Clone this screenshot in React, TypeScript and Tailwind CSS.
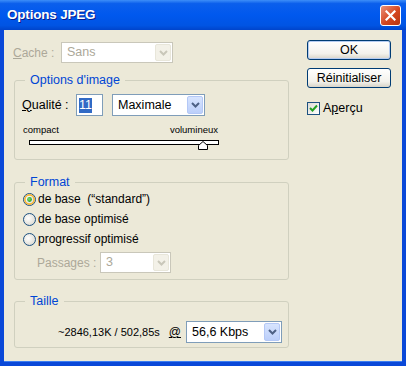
import React from "react";

function Chevron({ disabled }: { disabled?: boolean }) {
  return (
    <svg width="9" height="6" viewBox="0 0 9 6">
      <path
        d="M1 1 L4.5 4.5 L8 1"
        fill="none"
        stroke={disabled ? "#C9C7BA" : "#4D6185"}
        strokeWidth="2"
      />
    </svg>
  );
}

function Combo({
  value,
  className,
  disabled,
}: {
  value: string;
  className: string;
  disabled?: boolean;
}) {
  return (
    <div
      className={`flex items-stretch border bg-white ${
        disabled ? "border-[#C9C7BA] text-[#ACA899]" : "border-[#7F9DB9] text-black"
      } ${className}`}
    >
      <div className="flex flex-1 items-center pl-[5px] text-[12.5px]">{value}</div>
      <div
        className={`m-[1px] flex w-[16px] items-center justify-center rounded-[2px] border ${
          disabled
            ? "border-[#E8E6DA] bg-[#F3F1E8]"
            : "border-[#B4C8F6] bg-[linear-gradient(to_bottom,#D7E4FE,#BCCFFA)]"
        }`}
      >
        <Chevron disabled={disabled} />
      </div>
    </div>
  );
}

function Radio({ checked, hover }: { checked?: boolean; hover?: boolean }) {
  return (
    <svg width="13" height="13" viewBox="0 0 13 13">
      <defs>
        <radialGradient id="rb" cx="0.4" cy="0.4" r="0.7">
          <stop offset="0" stopColor="#FFFFFF" />
          <stop offset="1" stopColor="#D8D6CC" />
        </radialGradient>
        <radialGradient id="rd" cx="0.4" cy="0.4" r="0.6">
          <stop offset="0" stopColor="#7BE27B" />
          <stop offset="1" stopColor="#21A121" />
        </radialGradient>
      </defs>
      <circle cx="6.5" cy="6.5" r="6" fill="url(#rb)" stroke="#1C5180" strokeWidth="1" />
      {hover && <circle cx="6.5" cy="6.5" r="4.6" fill="none" stroke="#F8B636" strokeWidth="1.6" />}
      {checked && <circle cx="6.5" cy="6.5" r="2.4" fill="url(#rd)" />}
    </svg>
  );
}

function Group({
  title,
  className,
  children,
}: {
  title: string;
  className: string;
  children: React.ReactNode;
}) {
  return (
    <fieldset className={`ml-[1px] w-[275px] rounded-[3px] border border-[#D0D0BF] ${className}`}>
      <legend className="ml-[10px] px-[5px] text-[12.5px] leading-[14px] text-[#0046D5]">{title}</legend>
      {children}
    </fieldset>
  );
}

export default function App() {
  return (
    <div className="flex h-[366px] w-[406px] flex-col bg-[#0A48D8] font-['Liberation_Sans',Arial,sans-serif] text-[12px] text-black">
      {/* Title bar */}
      <div className="flex h-[30px] items-center justify-between bg-[linear-gradient(to_bottom,#3D8EF8,#0B5FEC_12%,#0058EE_50%,#0054E3_85%,#0044CB)] pl-[7px] pr-[5px]">
        <span className="text-[13.5px] font-bold tracking-[-0.2px] text-white [text-shadow:1px_1px_#0A1C8A]">
          Options JPEG
        </span>
        <div className="flex h-[21px] w-[21px] items-center justify-center rounded-[3px] border border-white bg-[linear-gradient(135deg,#E9917A,#D5461F_55%,#B83510)]">
          <svg width="11" height="11" viewBox="0 0 11 11">
            <path d="M1.5 1.5 L9.5 9.5 M9.5 1.5 L1.5 9.5" stroke="white" strokeWidth="2.2" strokeLinecap="square" />
          </svg>
        </div>
      </div>

      {/* Body */}
      <div className="mx-[4px] mb-[4px] flex flex-1 border-b border-[#3D7DF0] bg-[#ECE9D8]">
        {/* Left column */}
        <div className="w-[284px] pl-[9px] pt-[12px]">
          <div className="flex h-[21px] items-center">
            <span className="w-[48px] text-[#ACA899]">
              <span className="underline">C</span>ache :
            </span>
            <Combo value="Sans" disabled className="h-[21px] w-[112px]" />
          </div>

          <Group title="Options d'image" className="mt-[10px] pb-[9px]">
            <div className="pl-[7px]">
              <div className="mt-[7px] flex items-center">
                <span className="w-[54px] text-[12.5px]">
                  <span className="underline">Q</span>ualité :
                </span>
                <div className="flex h-[22px] w-[27px] items-center border border-[#7F9DB9] bg-white pl-[2px]">
                  <span className="bg-[#316AC5] text-[12.5px] leading-[15px] text-white">11</span>
                </div>
                <Combo value="Maximale" className="ml-[9px] h-[22px] w-[93px]" />
              </div>
              <div className="ml-[1px] mt-[8px] flex w-[195px] justify-between text-[9.5px] leading-[12px]">
                <span>compact</span>
                <span>volumineux</span>
              </div>
              <div className="relative ml-[7px] mt-[4px] h-[10px] w-[190px]">
                <div className="h-[5px] border border-black bg-white" />
                <svg className="absolute left-[169px] top-[1px]" width="10" height="9" viewBox="0 0 10 9">
                  <path d="M0.5 8.5 L0.5 4.5 L5 0.5 L9.5 4.5 L9.5 8.5 Z" fill="white" stroke="black" strokeWidth="1" />
                </svg>
              </div>
            </div>
          </Group>

          <Group title="Format" className="mt-[15px] pb-[6px]">
            <div className="pl-[8px]">
              <div className="flex h-[20px] items-center gap-[2px] text-[12px]">
                <Radio checked hover />
                <span>de base&nbsp; (“standard”)</span>
              </div>
              <div className="flex h-[20px] items-center gap-[2px] text-[12px]">
                <Radio />
                <span>de base optimisé</span>
              </div>
              <div className="flex h-[20px] items-center gap-[2px] text-[12px]">
                <Radio />
                <span>progressif optimisé</span>
              </div>
              <div className="mt-[3px] flex items-center">
                <span className="ml-[14px] w-[63px] text-[#ACA899]">Passages :</span>
                <Combo value="3" disabled className="h-[21px] w-[71px]" />
              </div>
            </div>
          </Group>

          <Group title="Taille" className="mt-[14px] pb-[4px]">
            <div className="mt-[13px] flex items-center justify-end pr-[6px]">
              <span className="text-[11px]">~2846,13K / 502,85s</span>
              <span className="ml-[9px] underline">@</span>
              <Combo value="56,6 Kbps" className="ml-[5px] h-[22px] w-[96px]" />
            </div>
          </Group>
        </div>

        {/* Right column */}
        <div className="ml-[19px] flex w-[84px] flex-col pt-[10px]">
          <button className="h-[20px] rounded-[3px] border border-[#003C74] bg-[linear-gradient(to_bottom,#FFFFFF,#F3F2EC_70%,#D8D4C8)] text-[12.5px] shadow-[inset_0_0_0_1px_#B4CCF2]">
            OK
          </button>
          <button className="mt-[8px] h-[20px] rounded-[3px] border border-[#003C74] bg-[linear-gradient(to_bottom,#FFFFFF,#F3F2EC_70%,#D8D4C8)] text-[12.5px]">
            Réinitialiser
          </button>
          <div className="mt-[11px] flex items-center gap-[3px] text-[12.5px]">
            <div className="flex h-[13px] w-[13px] items-center justify-center border border-[#1C5180] bg-[linear-gradient(135deg,#DCDBD5,#FFFFFF)]">
              <svg width="9" height="9" viewBox="0 0 9 9">
                <path d="M1 4 L3.5 6.5 L8 1.5" fill="none" stroke="#21A121" strokeWidth="2" />
              </svg>
            </div>
            <span>
              A<span className="underline">p</span>erçu
            </span>
          </div>
        </div>
      </div>
    </div>
  );
}
